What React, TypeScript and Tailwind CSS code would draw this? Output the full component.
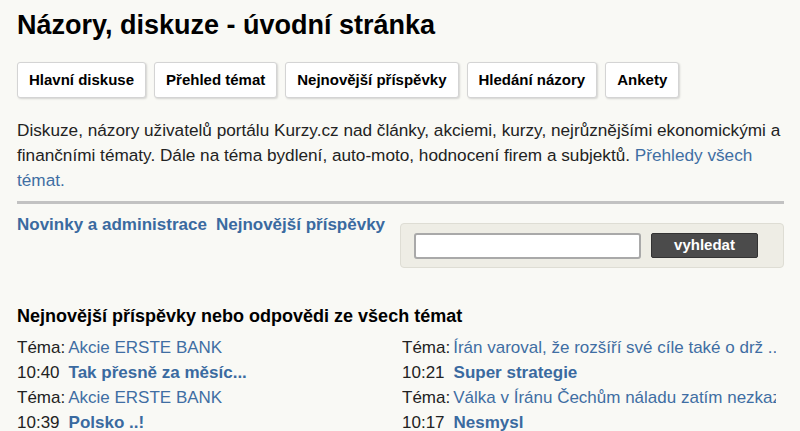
import React from 'react'

const tabs = ['Hlavní diskuse', 'Přehled témat', 'Nejnovější příspěvky', 'Hledání názory', 'Ankety']

type Post = { topic: string; time: string; title: string }

const left: Post[] = [
  { topic: 'Akcie ERSTE BANK', time: '10:40', title: 'Tak přesně za měsíc...' },
  { topic: 'Akcie ERSTE BANK', time: '10:39', title: 'Polsko ..!' },
]

const right: Post[] = [
  { topic: 'Írán varoval, že rozšíří své cíle také o drž ..', time: '10:21', title: 'Super strategie' },
  { topic: 'Válka v Íránu Čechům náladu zatím nezkazila', time: '10:17', title: 'Nesmysl' },
]

function PostColumn({ posts }: { posts: Post[] }): React.ReactElement {
  return (
    <div className="overflow-hidden whitespace-nowrap">
      {posts.map((p, i) => (
        <div key={i}>
          <div className="h-[25px] leading-[25px]">
            <span className="text-[#222]">Téma:</span>
            <a className="ml-[3px] text-[#3f6ea3]">{p.topic}</a>
          </div>
          <div className="h-[25px] leading-[25px]">
            <span className="text-[#222]">{p.time}</span>
            <a className="ml-[9px] font-bold text-[#3a6aa0]">{p.title}</a>
          </div>
        </div>
      ))}
    </div>
  )
}

export default function App(): React.ReactElement {
  return (
    <div className="min-h-[431px] bg-[#f9f9f5] px-[17px] pt-[6px] font-['Liberation_Sans',Arial,sans-serif] text-[#222]">
      <h1 className="text-[27px] font-bold leading-[38px] text-black">Názory, diskuze - úvodní stránka</h1>

      <div className="mt-[18px] flex gap-[8px]">
        {tabs.map((t) => (
          <button
            key={t}
            className="h-[36px] rounded-[3px] border border-[#d4d4d4] bg-white px-[11px] text-[15px] font-bold text-black shadow-[1px_1px_2px_rgba(0,0,0,0.15)]"
          >
            {t}
          </button>
        ))}
      </div>

      <p className="mt-[20px] w-[767px] text-[17.2px] leading-[25px] text-[#222]">
        Diskuze, názory uživatelů portálu Kurzy.cz nad články, akciemi, kurzy, nejrůznějšími ekonomickými a
        finančními tématy. Dále na téma bydlení, auto-moto, hodnocení firem a subjektů.{' '}
        <a className="text-[#3f6ea3]">Přehledy všech témat.</a>
      </p>

      <div className="mt-[8px] h-[3px] w-[767px] bg-[#c2c2c2]" />

      <div className="mt-[11px] flex w-[767px] items-start justify-between">
        <div className="flex gap-[9px] text-[17px] font-bold leading-[20px] text-[#3a6aa0]">
          <a>Novinky a administrace</a>
          <a>Nejnovější příspěvky</a>
        </div>
        <div className="mt-[8px] flex h-[45px] w-[384px] items-center gap-[10px] rounded-[4px] border border-[#deddd4] bg-[#eeede5] pl-[13px]">
          <input className="h-[26px] w-[227px] rounded-[3px] border-2 border-[#a9a9a9] bg-white" />
          <button className="h-[25px] w-[107px] rounded-[2px] border border-[#333] bg-[#4b4b4b] text-[15px] font-bold text-white">
            vyhledat
          </button>
        </div>
      </div>

      <h2 className="mt-[37px] text-[18px] font-bold leading-[22px] text-black">
        Nejnovější příspěvky nebo odpovědi ze všech témat
      </h2>

      <div className="mt-[8px] grid w-[760px] grid-cols-[385px_374px] text-[17px]">
        <PostColumn posts={left} />
        <PostColumn posts={right} />
      </div>
    </div>
  )
}
